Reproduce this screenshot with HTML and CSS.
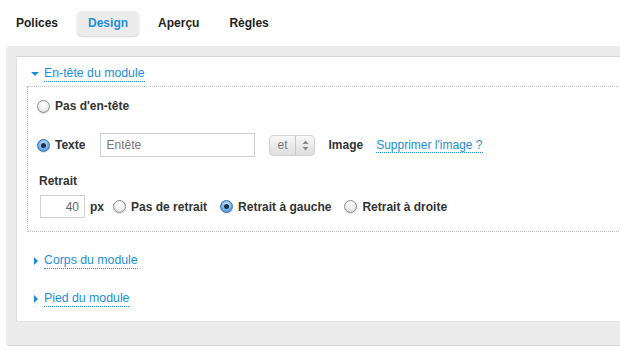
FILE: index.html
```html
<!DOCTYPE html>
<html>

<head>
  <title>Design du module</title>
  <meta charset="UTF-8">
  <meta name="viewport" content="width=device-width, initial-scale=1">
  <link rel="stylesheet" href="styles.css">
</head>

<body>
  <div class="tabs">
    <span class="tab">Polices</span>
    <span class="tab active">Design</span>
    <span class="tab">Aperçu</span>
    <span class="tab">Règles</span>
  </div>

  <div class="panel">
    <div class="sheet">

      <div class="section open">
        <div class="section-title"><span class="arrow down"></span><a href="#">En-tête du module</a></div>
        <div class="section-body">
          <label class="row first">
            <input type="radio" name="head"> Pas d'en-tête
          </label>
          <div class="row text-row">
            <label class="opt"><input type="radio" name="head" checked> Texte</label>
            <input class="field" type="text" value="Entête">
            <span class="select">
              <span class="select-value">et</span>
              <span class="select-arrows">
                <svg width="7" height="11" viewBox="0 0 7 11"><path d="M3.5 0.5 L6.5 4 L0.5 4 Z" fill="#8a8a8a"/><path d="M3.5 10.5 L6.5 7 L0.5 7 Z" fill="#8a8a8a"/></svg>
              </span>
            </span>
            <span class="label">Image</span>
            <a href="#">Supprimer l'image ?</a>
          </div>
          <div class="indent">
            <div class="label">Retrait</div>
            <div class="row indent-row">
              <input class="field small" type="text" value="40">
              <span class="label unit">px</span>
              <label class="opt"><input type="radio" name="indent"> Pas de retrait</label>
              <label class="opt"><input type="radio" name="indent" checked> Retrait à gauche</label>
              <label class="opt"><input type="radio" name="indent"> Retrait à droite</label>
            </div>
          </div>
        </div>
      </div>

      <div class="section">
        <div class="section-title"><span class="arrow right"></span><a href="#">Corps du module</a></div>
      </div>

      <div class="section last">
        <div class="section-title"><span class="arrow right"></span><a href="#">Pied du module</a></div>
      </div>

    </div>
  </div>
</body>
</html>
```

FILE: styles.css
```css
*{
  box-sizing:border-box;
}

body{
  margin:0;
  width:620px;
  overflow:hidden;
  font-family:"Liberation Sans", Arial, sans-serif;
  font-size:12px;
  color:#333;
  background:#fff;
}

a{
  color:#1b8fd8;
  text-decoration:none;
  border-bottom:1px dotted #1b8fd8;
}

/* tabs */
.tabs{
  display:flex;
  gap:8px;
  padding:11px 0 0 5px;
}
.tab{
  height:25px;
  line-height:25px;
  padding:0 11px;
  font-weight:bold;
  color:#222;
  border-radius:5px;
}
.tab.active{
  color:#1e90d6;
  background:#ececec;
  box-shadow:0 1px 2px rgba(0,0,0,0.18);
}

/* panel */
.panel{
  margin:10px -20px 0 6px;
  padding:10px 0 23px 10px;
  background:#ececec;
  border-radius:4px;
  border-bottom:1px solid #d6d6d6;
}
.sheet{
  background:#fff;
  border:1px solid #e2e2e2;
  border-top-color:#d6d6d6;
  padding:9px 0 14px 10px;
}

.section{
  margin-top:21px;
}
.section.open{
  margin-top:0;
}
.section.last{
  margin-top:22px;
}
.section-title{
  display:flex;
  align-items:center;
  height:16px;
  font-size:12.3px;
}
.section-title a{
  display:inline-block;
  line-height:14px;
  padding-bottom:1px;
}
.arrow{
  width:17px;
  height:16px;
  position:relative;
}
.arrow::before{
  content:"";
  position:absolute;
}
.arrow.down::before{
  left:4px;
  top:6px;
  border-left:4px solid transparent;
  border-right:4px solid transparent;
  border-top:4px solid #1b8fd8;
}
.arrow.right::before{
  left:7px;
  top:4px;
  border-top:4px solid transparent;
  border-bottom:4px solid transparent;
  border-left:4px solid #1b8fd8;
}

.section-body{
  margin-top:4px;
  border:1px dotted #bdbdbd;
  border-right:none;
  padding:11px 0 13px 9px;
}

.row{
  display:flex;
  align-items:center;
  font-weight:bold;
}
.row.first{
  height:16px;
}
.row.text-row{
  margin-top:19px;
  height:24px;
}
.opt{
  display:flex;
  align-items:center;
  font-weight:bold;
}
.label{
  font-weight:bold;
}

input[type=radio]{
  -webkit-appearance:none;
  appearance:none;
  width:13px;
  height:13px;
  margin:0 5px 0 0;
  border-radius:50%;
  border:1px solid #8d8d8d;
  background:radial-gradient(circle at 50% 35%, #ffffff 0%, #f2f2f2 45%, #cfcfcf 100%);
  box-shadow:0 1px 1px rgba(0,0,0,0.12);
  position:relative;
}
input[type=radio]:checked{
  border-color:#3d6ea6;
  background:radial-gradient(circle at 50% 35%, #d5ebff 0%, #7fb9ef 45%, #3b86d4 100%);
}
input[type=radio]:checked::after{
  content:"";
  position:absolute;
  left:3px;
  top:3px;
  width:5px;
  height:5px;
  border-radius:50%;
  background:#1c2e48;
}

.field{
  font-family:inherit;
  font-size:12px;
  color:#777;
  border:1px solid #cfcfcf;
  height:24px;
  padding:0 5px;
  outline:none;
}
.text-row .field{
  width:155px;
  margin-left:15px;
}

.select{
  display:flex;
  align-items:center;
  height:21px;
  margin-left:14px;
  border:1px solid #d2d2d2;
  border-radius:4px;
  background:linear-gradient(#f7f7f7, #dedede);
  font-weight:normal;
  color:#777;
}
.select-value{
  padding:0 8px 0 7px;
  border-right:1px solid #c8c8c8;
  line-height:19px;
}
.select-arrows{
  display:flex;
  align-items:center;
  padding:0 5px 0 6px;
}
.select + .label{
  margin-left:13px;
}
.text-row a{
  margin-left:13px;
  font-weight:normal;
  line-height:14px;
}

.indent{
  margin:16px 0 0 2px;
}
.indent > .label{
  height:16px;
  line-height:16px;
}
.indent-row{
  margin-top:6px;
  height:23px;
}
.field.small{
  width:45px;
  height:23px;
  margin-left:1px;
  text-align:right;
  color:#666;
}
.unit{
  margin:0 9px 0 5px;
}
.indent-row .opt + .opt{
  margin-left:13px;
}
```
